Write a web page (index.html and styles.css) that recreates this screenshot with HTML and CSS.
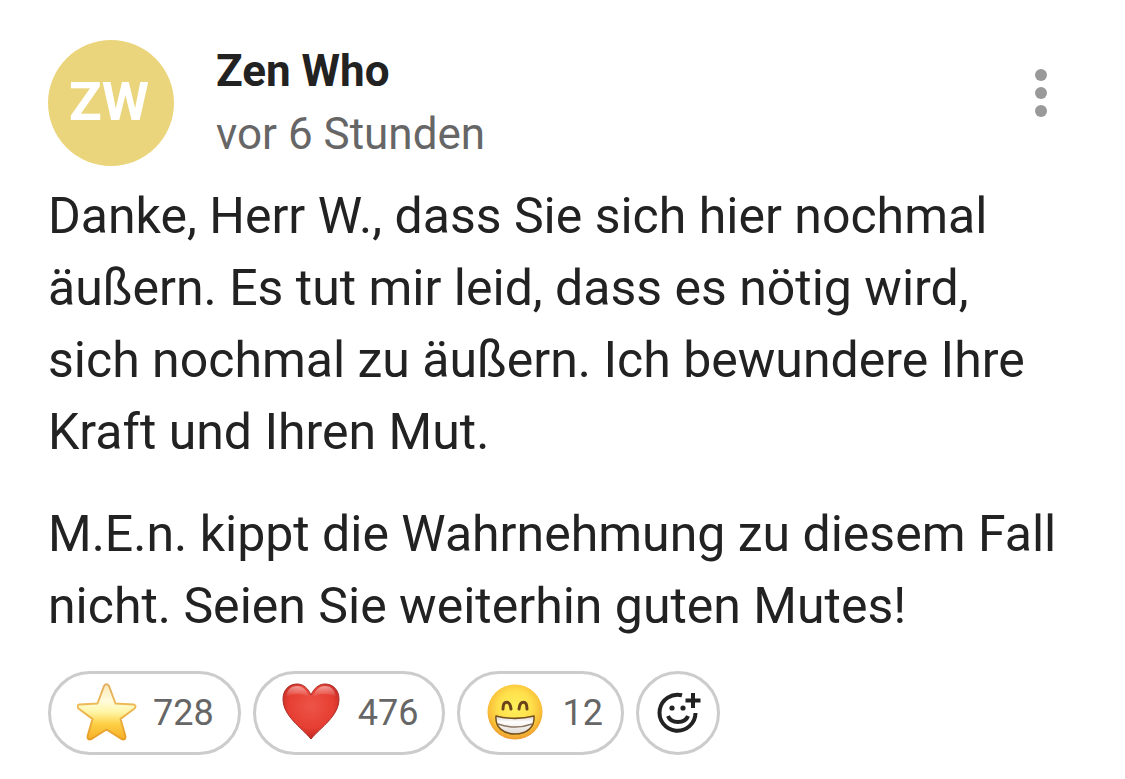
FILE: index.html
```
<!DOCTYPE html>
<html lang="de">
<head>
  <meta charset="UTF-8">
  <meta name="viewport" content="width=device-width, initial-scale=1">
  <title>Kommentar</title>
  <link rel="stylesheet" href="styles.css">
</head>
<body>

  <article class="comment">

    <!-- Autor und Zeitpunkt -->
    <header class="comment-header">
      <div class="avatar">ZW</div>
      <div class="meta">
        <h2 class="author">Zen Who</h2>
        <p class="time">vor 6 Stunden</p>
      </div>
      <button class="menu" type="button" aria-label="Mehr Optionen">
        <svg width="12" height="48" viewBox="0 0 12 48" fill="#999">
          <circle cx="6" cy="6" r="6"/>
          <circle cx="6" cy="24" r="6"/>
          <circle cx="6" cy="42" r="6"/>
        </svg>
      </button>
    </header>

    <!-- Kommentartext -->
    <div class="comment-text">
      <p>Danke, Herr W., dass Sie sich hier nochmal äußern. Es tut mir leid, dass es nötig wird, sich nochmal zu äußern. Ich bewundere Ihre Kraft und Ihren Mut.</p>
      <p>M.E.n. kippt die Wahrnehmung zu diesem Fall nicht. Seien Sie weiterhin guten Mutes!</p>
    </div>

    <!-- Reaktionen -->
    <div class="reactions">
      <button class="reaction" type="button" aria-label="Stern 728">
        <svg class="emoji" viewBox="0 0 60 60">
          <defs>
            <linearGradient id="star" x1="0" y1="0" x2="0" y2="1">
              <stop offset="0" stop-color="#fbeab8"/>
              <stop offset="0.3" stop-color="#fffbdc"/>
              <stop offset="0.5" stop-color="#fff6a8"/>
              <stop offset="0.72" stop-color="#fdd045"/>
              <stop offset="1" stop-color="#f6ae28"/>
            </linearGradient>
            <linearGradient id="star-edge" x1="0" y1="0" x2="0" y2="1">
              <stop offset="0" stop-color="#e0ae62"/>
              <stop offset="0.4" stop-color="#eebb55"/>
              <stop offset="1" stop-color="#e89e25"/>
            </linearGradient>
          </defs>
          <path d="M27 3Q29.500 -0.500 32 3L38.500 20.500L56.500 21.500Q60 22.500 57.500 25.500L43.500 36L48.500 53.500Q48.500 57.500 44.500 56L29.500 46.500L14.500 56Q10.500 57.500 10.500 53.500L15.500 36L1.500 25.500Q-1 22.500 2.500 21.500L20.500 20.500Z" fill="url(#star)" stroke="url(#star-edge)" stroke-width="2" stroke-linejoin="round"/>
        </svg>
        <span>728</span>
      </button>

      <button class="reaction" type="button" aria-label="Herz 476">
        <svg class="emoji" viewBox="0 0 60 60">
          <defs>
            <radialGradient id="heart" cx="0.5" cy="0.4" r="0.62">
              <stop offset="0" stop-color="#ee5448"/>
              <stop offset="0.65" stop-color="#e63e32"/>
              <stop offset="0.9" stop-color="#c82c25"/>
              <stop offset="1" stop-color="#a71d1a"/>
            </radialGradient>
            <linearGradient id="heart-shine" x1="0" y1="0" x2="0" y2="1">
              <stop offset="0" stop-color="#fff" stop-opacity="0.5"/>
              <stop offset="1" stop-color="#fff" stop-opacity="0"/>
            </linearGradient>
          </defs>
          <path d="M29 12C26 5 21 1 15 1C7 1 1 7 1 16C1 33 19 44 29 56C39 44 57 33 57 16C57 7 51 1 43 1C37 1 32 5 29 12Z" fill="url(#heart)" stroke="#aa3029" stroke-width="1"/>
          <path d="M4 14C5 6 10 3 15 3C21 3 25 7 27 14C20 10 11 10 4 14ZM31 14C33 7 37 3 43 3C48 3 53 6 54 14C47 10 38 10 31 14Z" fill="url(#heart-shine)"/>
        </svg>
        <span>476</span>
      </button>

      <button class="reaction reaction-short" type="button" aria-label="Grinsen 12">
        <svg class="emoji" viewBox="0 0 60 60">
          <defs>
            <radialGradient id="face" cx="0.5" cy="0.42" r="0.6">
              <stop offset="0" stop-color="#fff05a"/>
              <stop offset="0.5" stop-color="#fee04c"/>
              <stop offset="0.78" stop-color="#fac139"/>
              <stop offset="1" stop-color="#e9932c"/>
            </radialGradient>
            <linearGradient id="teeth" x1="0" y1="0" x2="0" y2="1">
              <stop offset="0" stop-color="#d9d4cf"/>
              <stop offset="0.35" stop-color="#fff"/>
              <stop offset="1" stop-color="#ddd7d0"/>
            </linearGradient>
          </defs>
          <circle cx="29" cy="29" r="27.500" fill="url(#face)"/>
          <path d="M17 26C17 17 24 17 25 26M33 26C34 17 41 17 41 26" fill="none" stroke="#6b431b" stroke-width="3" stroke-linecap="round"/>
          <path d="M10 33C22 36 36 36 48 33C49 44 41 51 29 51C17 51 9 44 10 33Z" fill="url(#teeth)" stroke="#75501e" stroke-width="1.500" stroke-linejoin="round"/>
          <path d="M12 41C23 45 35 45 46 41" fill="none" stroke="#8a7660" stroke-width="1.500"/>
        </svg>
        <span>12</span>
      </button>

      <button class="reaction-add" type="button" aria-label="Reaktion hinzufügen">
        <svg width="48" height="48" viewBox="0 0 48 48" fill="none" stroke="#222" stroke-width="4">
          <path d="M28 6.300A18 18 0 1 0 41.500 24"/>
          <path d="M39 4V19M31.500 11.500H46.500"/>
          <path d="M14 27C17 35 31 35 34 27"/>
          <circle cx="18" cy="19" r="2.600" fill="#222" stroke="none"/>
          <circle cx="29" cy="19" r="2.600" fill="#222" stroke="none"/>
        </svg>
      </button>
    </div>

  </article>

</body>
</html>
```
FILE: styles.css
```
/* Grundstile */
* {
  box-sizing: border-box;
}

body {
  margin: 0;
  background-color: #fff;
  color: #222;
  font-family: Roboto, "Liberation Sans", sans-serif;
}

h2, p {
  margin: 0;
}

button {
  padding: 0;
  border: none;
  background: none;
  color: inherit;
  font-family: inherit;
  cursor: pointer;
}

svg {
  display: block;
}

.comment {
  padding: 40px 48px 24px;
}

/* Kopfzeile */
.comment-header {
  display: flex;
  align-items: flex-start;
  margin-bottom: 14px;
}

.avatar {
  display: flex;
  align-items: center;
  justify-content: center;
  width: 126px;
  height: 126px;
  padding-right: 4px;
  padding-bottom: 4px;
  border-radius: 50%;
  background-color: #ebd57c;
  color: #fff;
  font-size: 54px;
  font-weight: bold;
}

.meta {
  flex: 1;
  margin-left: 42px;
}

.author, .time {
  font-size: 44px;
  line-height: 63px;
}

.author {
  font-weight: bold;
}

.time {
  color: #666;
}

.menu {
  display: flex;
  align-items: center;
  justify-content: center;
  width: 72px;
  height: 106px;
}

/* Text */
.comment-text {
  padding-right: 16px;
  font-size: 50px;
  line-height: 72px;
}

.comment-text p {
  margin-bottom: 30px;
}

.comment-text p:last-child {
  margin-bottom: 29px;
}

/* Reaktionen */
.reactions {
  display: flex;
  flex-wrap: wrap;
  gap: 12px;
}

.reaction, .reaction-add {
  display: flex;
  align-items: center;
  height: 84px;
  border: 3px solid #ccc;
  border-radius: 42px;
}

.reaction {
  gap: 16px;
  padding: 0 24px 0 26px;
  color: #666;
  font-size: 36px;
}

.reaction-short {
  padding-right: 18px;
}

.reaction-add {
  justify-content: center;
  width: 84px;
}

.emoji {
  width: 60px;
  height: 60px;
}
```
